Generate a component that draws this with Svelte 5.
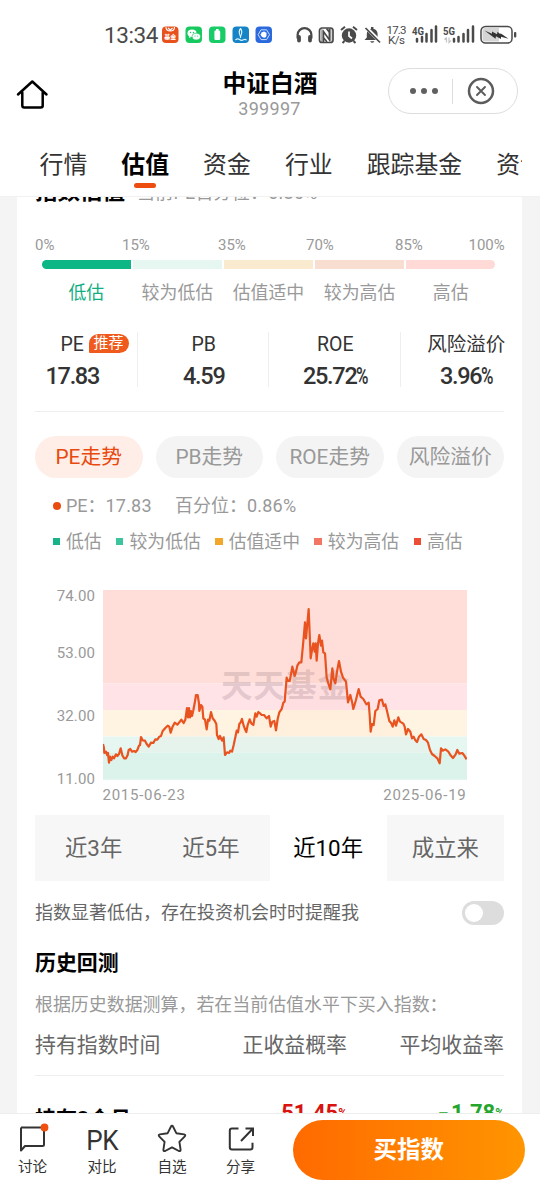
<script>
  const tabs = ['行情', '估值', '资金', '行业', '跟踪基金', '资讯'];
  const bands = [
    { name: '低估', color: '#0cb685' },
    { name: '较为低估', color: '#e6f6f1' },
    { name: '估值适中', color: '#faead0' },
    { name: '较为高估', color: '#f8ddd1' },
    { name: '高估', color: '#ffdad6' }
  ];
  const marks = ['0%', '15%', '35%', '70%', '85%', '100%'];
  const metrics = [
    { name: 'PE', value: '17.83', badge: '推荐' },
    { name: 'PB', value: '4.59' },
    { name: 'ROE', value: '25.72', pct: true },
    { name: '风险溢价', value: '3.96', pct: true }
  ];
  const trends = ['PE走势', 'PB走势', 'ROE走势', '风险溢价'];
  const legend = [
    { name: '低估', color: '#18b389' },
    { name: '较为低估', color: '#3cc49c' },
    { name: '估值适中', color: '#f2a62a' },
    { name: '较为高估', color: '#f37563' },
    { name: '高估', color: '#ee4d35' }
  ];
  const periods = ['近3年', '近5年', '近10年', '成立来'];

  const early =
    '189,507 192,520 193,534 198,530 201,540 204,534 207,563 210,545 214,555 218,545 222,550 228,538 232,543 237,537 242,520 247,541 252,550 258,550 263,540 266,525 271,522 276,530 282,528 287,531 292,525 297,512 300,510 303,486 308,496 315,497 320,507 326,515 333,503 340,504 346,493 352,494 358,485 363,483 368,468 376,459 383,452 388,455 392,473 397,457 404,443 412,449 418,442 424,434 431,444 436,434 441,399 444,427 447,399 450,427 453,408 456,423 460,406 464,385 468,360 473,360 477,385 478,408 483,390 487,395 490,430 495,434 500,463 504,434 508,437 513,411 518,430 524,437 529,447 531,480 536,492 540,483 546,497 551,487 555,540 561,532 567,534 571,527 576,530 581,510 586,487 590,467 594,472 598,447 602,442 606,432 611,452 616,465 619,471 623,450 629,433 634,445 640,450 646,415 650,425 655,411';
  const late =
    '0,415 5,420 12,420 20,430 27,423 32,455 37,440 43,438 48,466 53,432 58,412 65,402 70,383 74,380 80,308 84,318 89,318 92,303 97,275 104,303 108,290 112,272 118,262 124,262 129,210 135,142 138,190 146,102 152,250 156,225 160,205 164,230 167,205 170,257 174,205 178,180 183,212 186,197 190,232 195,235 200,308 205,325 211,343 217,280 221,312 226,325 231,290 237,258 243,290 249,308 258,320 264,382 271,360 276,380 280,402 287,378 296,342 302,365 310,372 319,388 326,383 329,420 332,470 336,447 341,450 346,408 353,402 358,376 366,374 371,393 376,388 381,408 388,438 394,445 398,455 403,436 408,452 415,427 420,440 430,446 434,455 438,478 444,462 451,470 456,490 461,485 466,496 471,501 477,485 484,478 491,492 498,495 504,503 510,525 516,537 524,543 532,550 539,565 543,520 549,527 556,523 565,530 571,540 579,549 587,538 592,525 598,536 607,534 613,542 620,553';
  const parse = (s, dx) =>
    s.split(' ').map((p) => {
      const [x, y] = p.split(',').map(Number);
      return `${((x + dx) / 3).toFixed(2)},${((y - 45) / 3).toFixed(2)}`;
    });
  const line = [...parse(early, -189), ...parse(late, 471)].join(' ');
</script>

<div class="screen">
  <header>
    <div class="status">
      <span class="time">13:34</span>
      <svg class="apps" width="112" height="20" viewBox="0 0 112 20">
        <rect x="1" y="1.500" width="16.500" height="16.500" rx="4" fill="#e8501c" />
        <path d="M5 2q0 4 4.300 4T13.500 2M7 3l2.300 2L11.500 3" stroke="#fff" stroke-width="1.100" fill="none" />
        <text x="9.200" y="14.300" font-size="6" font-weight="700" fill="#fff" text-anchor="middle">基金</text>
        <rect x="24.500" y="1.500" width="16.500" height="16.500" rx="4" fill="#18c95f" />
        <ellipse cx="31" cy="8.300" rx="4.500" ry="3.700" fill="#fff" />
        <ellipse cx="35.300" cy="11.600" rx="4.200" ry="3.400" fill="#fff" stroke="#18c95f" stroke-width=".7" />
        <path d="M28 13l.3-2 2 1z" fill="#fff" />
        <g fill="#18c95f"><circle cx="29.500" cy="7.500" r=".7" /><circle cx="32.500" cy="7.500" r=".7" /><circle cx="34" cy="11" r=".6" /><circle cx="36.700" cy="11" r=".6" /></g>
        <rect x="48" y="1.500" width="16.500" height="16.500" rx="4" fill="#18cd68" />
        <rect x="53.400" y="5.500" width="5.800" height="9.500" rx="1.200" fill="#fff" /><rect x="55" y="4" width="2.600" height="2" fill="#fff" />
        <rect x="71.500" y="1.500" width="16.500" height="16.500" rx="4" fill="#1583c5" />
        <path d="M79.500 3.500q-2.500 3 0 8q2.500-5 0-8M79.500 11v2M74.500 15q2-2 4-.5t4 .3 3 .5" stroke="#d9f3ff" stroke-width="1.200" fill="none" />
        <rect x="94.500" y="1.500" width="16.500" height="16.500" rx="4" fill="#2a6add" />
        <path d="M100 4.800h5.600l2.900 4.900-2.900 4.900H100l-2.900-4.900z" stroke="#c9dcff" stroke-width="1" fill="none" />
        <path d="M100.200 9V7.500h1V7h1.200v-.5h1.200V7h1v.7h.9V10q0 2.700-2.300 2.700T99.300 9.500z" fill="#fff" />
      </svg>
      <svg class="sys" width="222" height="24" viewBox="0 0 222 24">
        <g fill="none" stroke="#4a4a4a">
          <path d="M2.600 15.500V12a6.900 6.900 0 0 1 13.800 0v3.500" stroke-width="2.200" />
          <path d="M4 14v3.500M15 14v3.500" stroke-width="3.800" stroke-linecap="round" />
          <rect x="24.500" y="5" width="13.500" height="14.500" rx="2.500" stroke-width="1.700" />
          <path d="M28.500 19V8.500l6 8.500V6M31.500 5.500l3 4M28 14l4 5" stroke-width="1.600" />
        </g>
        <path d="M26 5.500l3 3V19h-3zM36.500 5v14l-3-3V5z" fill="#4a4a4a" opacity=".45" />
        <circle cx="54" cy="12.500" r="7.200" fill="#4a4a4a" />
        <path d="M54 8.500v4.500l3 2.500" stroke="#fff" stroke-width="1.700" fill="none" />
        <path d="M46 7l4-3.200M62 7l-4-3.200M49.500 18l-2 2M58.500 18l2 2" stroke="#4a4a4a" stroke-width="2" />
        <path d="M69.500 17l2.300-2.500V11q0-4 4.200-5.200V4h2.400v1.800q4.200 1.200 4.200 5.200v3.500L85 17zM75 18.300h4.500q-2.200 3-4.500 0" fill="#4a4a4a" />
        <path d="M71.500 5l14.500 14.500" stroke="#fff" stroke-width="3.500" /><path d="M70.500 5l14.500 14.500" stroke="#4a4a4a" stroke-width="1.700" />
        <g fill="#4a4a4a" font-size="11.500">
          <text x="91.500" y="11" textLength="20">17.3</text>
          <text x="93" y="21.300" textLength="17">K/s</text>
        </g>
        <g fill="#4a4a4a" font-size="10.500" font-weight="700">
          <text x="117" y="11.500" textLength="12" lengthAdjust="spacingAndGlyphs">4G</text>
          <text x="148" y="11.500" textLength="12" lengthAdjust="spacingAndGlyphs">5G</text>
        </g>
        <path d="M122 16v2.500M127 14v4.500M131.500 11v7.500M136.500 7v11.500M141 3.500v15M159 16v2.500M163.500 14v4.500M168.500 11v7.500M173 7v11.500M178 3.500v15" stroke="#4a4a4a" stroke-width="2.500" stroke-linecap="round" />
        <path d="M151.500 14.500v5M149.500 16.500l2-2M154 14.500v5l2-2" stroke="#c4c4c4" stroke-width="1.200" fill="none" />
        <rect x="186" y="3.500" width="31" height="16.500" rx="4.500" fill="#fff" stroke="#4a4a4a" stroke-width="1.500" />
        <path d="M190 5h14v13.500h-14q-2.500 0-2.500-2.500V7.500q0-2.500 2.500-2.500z" fill="#d5d5d5" />
        <path d="M189.500 7.500l7.500 3.300v-2.300l5 2.800.5-2.500 3 2.500v-1l8 5.500-7.500-2v2.300l-5-2.800-.5 2.500-3-2.300z" fill="#333" />
        <rect x="219" y="9" width="2.300" height="5.500" rx="1" fill="#4a4a4a" />
      </svg>
    </div>
    <div class="titlebar">
      <svg class="home" width="34" height="32" viewBox="0 0 34 32" fill="none" stroke="#000" stroke-width="2.500" stroke-linejoin="round" stroke-linecap="round">
        <path d="M2 15.500L16.300 2.500l14.200 13M6.300 13.500v13q0 2 2 2h16.400q2 0 2-2v-13" />
      </svg>
      <div class="name"><h1>中证白酒</h1><p>399997</p></div>
      <div class="capsule">
        <i></i><i></i><i></i><b></b>
        <svg width="28" height="28" viewBox="0 0 28 28" fill="none" stroke="#5c5c5c"><circle cx="14" cy="14" r="12" stroke-width="2.500" /><path d="M10 10l8 8M18 10l-8 8" stroke-width="1.900" stroke-linecap="round" /></svg>
      </div>
    </div>
    <nav class="tabs">
      {#each tabs as t, i}<span class:active={i === 1}>{t}</span>{/each}
    </nav>
  </header>

  <main>
    <section class="card">
      <div class="cardhead"><strong>指数估值</strong><span>当前PE百分位：0.86%</span></div>
      <div class="marks">{#each marks as m}<span>{m}</span>{/each}</div>
      <div class="segments">
        {#each bands as b}<i style="background:{b.color}"></i>{/each}
      </div>
      <div class="segnames">{#each bands as b, i}<span class:on={i === 0}>{b.name}</span>{/each}</div>
      <div class="metrics">
        {#each metrics as m}
          <div class="metric">
            <span class="mname">{m.name}{#if m.badge}<em>{m.badge}</em>{/if}</span>
            <span class="mvalue">{m.value}{#if m.pct}<small>%</small>{/if}</span>
          </div>
        {/each}
      </div>
      <div class="chips">
        {#each trends as t, i}<span class:on={i === 0}>{t}</span>{/each}
      </div>
      <div class="current"><i></i><span class="pe">PE：</span><span class="n1">17.83</span><span class="pct">百分位：</span><span class="n2">0.86%</span></div>
      <div class="legend">
        {#each legend as l}<span><i style="background:{l.color}"></i>{l.name}</span>{/each}
      </div>
      <div class="chart">
        <div class="axis"><span>74.00</span><span>53.00</span><span>32.00</span><span>11.00</span></div>
        <div class="plot">
          <svg width="364" height="190" viewBox="0 0 364 190">
            <defs>
              <linearGradient id="area" x1="0" y1="0" x2="0" y2="190" gradientUnits="userSpaceOnUse">
                <stop offset="0" stop-color="#f2561d" stop-opacity=".06" /><stop offset="1" stop-color="#f2561d" stop-opacity="0.015" />
              </linearGradient>
            </defs>
            <rect width="364" height="93.500" fill="#ffddd8" />
            <rect y="93.500" width="364" height="26.500" fill="#ffe3e7" />
            <rect y="120" width="364" height="26.500" fill="#fff3e2" />
            <rect y="146.500" width="364" height="16" fill="#e6f6f1" />
            <rect y="162.500" width="364" height="27.200" fill="#dbf3ea" />
            <text x="118" y="106.500" font-size="31.500" font-weight="700" textLength="128" fill="#755b66" opacity=".19">天天基金</text>
            <polygon points="0,162.5 {line} 364,162.5" fill="url(#area)" />
            <polyline points={line} fill="none" stroke="#e8531f" stroke-width="2.200" stroke-linejoin="round" />
          </svg>
          <div class="dates"><span>2015-06-23</span><span>2025-06-19</span></div>
        </div>
      </div>
      <div class="periods">{#each periods as p, i}<span class:on={i === 2}>{p}</span>{/each}</div>
      <div class="remind"><span>指数显著低估，存在投资机会时时提醒我</span><i class="switch"></i></div>
      <h2>历史回测</h2>
      <p class="desc">根据历史数据测算，若在当前估值水平下买入指数：</p>
      <div class="row th"><span>持有指数时间</span><span>正收益概率</span><span>平均收益率</span></div>
      <div class="row td"><span>持有3个月</span><span class="up">51.45<small>%</small></span><span class="down"><b>-</b>1.78<small>%</small></span></div>
    </section>
  </main>

  <footer>
    <div class="act">
      <svg width="34" height="32" viewBox="0 0 34 32"><path d="M5 5.500h21.500q1.500 0 1.500 1.500v15.500q0 1.500-1.500 1.500H9l-4 4.500V5.500" fill="none" stroke="#333" stroke-width="2" stroke-linejoin="round" /><circle cx="28.500" cy="5.500" r="3.900" fill="#f0500f" /></svg>
      <span>讨论</span>
    </div>
    <div class="act"><div class="pk">PK</div><span>对比</span></div>
    <div class="act">
      <svg width="34" height="32" viewBox="0 0 34 32"><path d="M17 3.600q.6 0 1 .9l3.300 6.700 7.800 1.200q1.900.5.700 2l-5.400 5.500 1.200 7.800q0 1.900-1.700 1.300L17 25.400l-6.900 3.600q-1.700.6-1.700-1.300l1.200-7.800-5.400-5.500q-1.200-1.500.7-2l7.800-1.200L16 4.500q.4-.9 1-.9z" fill="none" stroke="#333" stroke-width="1.900" stroke-linejoin="round" /></svg>
      <span>自选</span>
    </div>
    <div class="act">
      <svg width="34" height="32" viewBox="0 0 34 32" fill="none" stroke="#333" stroke-width="2"><path d="M14.500 6.500H8Q5.800 6.500 5.800 8.700v16.600q0 2.200 2.200 2.200h18.300q2.200 0 2.200-2.200v-4.500M17 19L28.500 7M21.500 6.500H29V14" /></svg>
      <span>分享</span>
    </div>
    <button>买指数</button>
  </footer>
</div>

<style>
  :global(body) { margin: 0; background: #fff; }
  * { box-sizing: border-box; }
  .screen { width: 540px; height: 1188px; overflow: hidden; display: flex; flex-direction: column; background: #f4f4f4; font-family: Roboto, "Noto Sans CJK SC", sans-serif; color: #333; }
  i, em { font-style: normal; }
  header { height: 197px; flex: none; background: #fff; border-bottom: 1px solid #f1f1f1; }
  .status { height: 69px; display: flex; align-items: center; padding: 0 22px 0 104px; }
  .time { width: 57px; font-size: 22.500px; letter-spacing: -.4px; color: #4a4a4a; white-space: nowrap; line-height: 30px; }
  .apps { flex: none; }
  .sys { flex: none; margin-left: 22px; overflow: visible; }
  .titlebar { height: 68px; display: grid; grid-template-columns: 130px 1fr 130px; padding: 0 22px 0 16px; margin-top: -1px; }
  .home { margin-top: 11px; }
  .name { text-align: center; margin-right: -5px; }
  h1 { margin: 2px 0 0 1px; font-size: 23.800px; line-height: 29px; font-weight: 700; color: #000; }
  .name p { margin: 0; font-size: 18px; line-height: 20px; letter-spacing: .3px; color: #999; }
  .capsule { height: 46px; width: 130px; border: 1px solid #ddd; border-radius: 23px; display: flex; align-items: center; padding-left: 21px; }
  .capsule i { width: 6px; height: 6px; border-radius: 50%; background: #606060; margin-right: 4.800px; }
  .capsule b { width: 1px; height: 25px; background: #ddd; margin: 0 14px 0 10px; }
  .tabs { height: 60px; margin: 0 18px 0 0; padding: 11px 0 0 39.500px; display: flex; gap: 34px; overflow: hidden; white-space: nowrap; font-size: 23.900px; line-height: 36px; }
  .tabs span { flex: none; display: flex; flex-direction: column; align-items: center; }
  .tabs .active { color: #000; font-weight: 700; }
  .tabs .active::after { content: ''; width: 22px; height: 5px; border-radius: 3px; background: #ee4d10; }
  main { flex: 1; min-height: 0; overflow: hidden; padding: 0 18px 0 17px; }
  .card { background: #fff; padding: 0 18px; height: 960px; overflow: hidden; }
  .cardhead { margin-top: -21px; height: 30px; line-height: 31px; display: flex; gap: 12px; white-space: nowrap; }
  .cardhead strong { font-size: 22.500px; color: #000; }
  .cardhead span { font-size: 18px; letter-spacing: .2px; line-height: 33px; color: #999; }
  .marks { margin-top: 28px; height: 20px; display: grid; grid-template-columns: 87px 96px 88px 89px 73.500px 36px; font-size: 15px; line-height: 22.500px; color: #999; }
  .segments { margin-top: 5.500px; height: 9px; display: flex; gap: 2.500px; padding: 0 9px 0 7px; }
  .segments i { flex: 1; }
  .segments i:first-child { border-radius: 5px 0 0 5px; }
  .segments i:last-child { border-radius: 0 5px 5px 0; }
  .segnames { margin-top: 11px; height: 24px; display: flex; gap: 2.500px; padding: 0 9px 0 7px; font-size: 17.900px; line-height: 26px; color: #999; }
  .segnames span { flex: 1; text-align: center; white-space: nowrap; }
  .segnames .on { color: #12ae82; }
  .metrics { margin: 28.500px -28px 0 -29px; height: 55px; display: grid; grid-template-columns: repeat(4, 1fr); grid-template-rows: 55px; }
  .metric { display: flex; flex-direction: column; align-items: center; border-right: 1px solid #eee; padding-left: 2px; }
  .metric:last-child { border: 0; padding: 0; }
  .mname { position: relative; font-size: 19.500px; line-height: 26px; white-space: nowrap; }
  .mname em { position: absolute; left: 28px; top: 2px; width: 40px; height: 19px; border-radius: 10px 10px 10px 1px; background: #f05a1c; color: #fff; font-size: 15px; line-height: 19px; text-align: center; }
  .mvalue { margin-top: 2px; font-size: 23.500px; line-height: 33px; font-weight: 500; letter-spacing: -1.300px; }
  .mvalue small { display: inline-block; font-size: 23.500px; transform: scaleX(.72); transform-origin: 0 50%; margin-right: -5px; }
  .chips { margin-top: 24px; padding-top: 24px; border-top: 1px solid #eee; display: flex; justify-content: space-between; }
  .chips span { width: 107.500px; height: 41.500px; border-radius: 21px; background: #f4f4f4; color: #999; font-size: 20.800px; line-height: 42px; text-align: center; white-space: nowrap; }
  .chips .on { background: #ffede7; color: #e8490f; }
  .current { margin-top: 16px; height: 24px; padding-left: 17.500px; display: flex; align-items: center; font-size: 18px; line-height: 24px; color: #999; white-space: nowrap; }
  .current i { width: 8px; height: 8px; border-radius: 50%; background: #ea4c10; margin-right: 5.500px; }
  .current span { flex: none; }
  .pe { width: 39.500px; }
  .n1 { width: 69.500px; letter-spacing: .2px; }
  .pct { width: 72px; }
  .n2 { letter-spacing: .2px; }
  .legend { margin-top: 12px; height: 24px; padding-left: 17.500px; display: flex; gap: 14.300px; font-size: 17.850px; line-height: 24px; color: #999; white-space: nowrap; }
  .legend span { display: flex; align-items: center; gap: 6px; }
  .legend i { width: 7.500px; height: 7.500px; }
  .chart { margin-top: 36px; height: 225px; display: flex; color: #999; font-size: 15px; }
  .axis { width: 60px; height: 190px; margin-right: 7.500px; display: grid; grid-template-rows: 57px 63px 63px 20px; text-align: right; line-height: 13px; letter-spacing: .1px; }
  .plot svg { display: block; }
  .dates { margin-top: 5px; display: flex; justify-content: space-between; line-height: 20px; letter-spacing: .75px; }
  .periods { height: 66px; display: flex; background: #f7f7f7; }
  .periods span { flex: 1; text-align: center; font-size: 22.400px; line-height: 66px; color: #666; }
  .periods .on { background: #fff; color: #000; }
  .remind { margin-top: 19px; height: 26px; display: flex; justify-content: space-between; align-items: center; font-size: 18px; line-height: 24px; color: #666; white-space: nowrap; }
  .remind span { margin-top: 1px; }
  .switch { width: 42px; height: 24px; border-radius: 12px; background: #ddd; padding: 3px; }
  .switch::after { content: ''; display: block; width: 18px; height: 18px; border-radius: 50%; background: #fff; }
  h2 { margin: 23px 0 0; font-size: 20.900px; line-height: 28px; color: #000; }
  .desc { margin: 16px 0 0; font-size: 17.950px; line-height: 24px; color: #999; white-space: nowrap; }
  .row { display: grid; grid-template-columns: 156px 156px 157px; white-space: nowrap; }
  .row span:not(:first-child) { text-align: right; }
  .th { margin-top: 14px; height: 45px; border-bottom: 1.500px solid #eee; font-size: 20.900px; line-height: 28px; color: #666; }
  .td { margin-top: 27px; font-size: 21px; font-weight: 700; line-height: 32px; color: #000; }
  .td small { font-size: 12px; position: relative; top: -3px; }
  .td .up { color: #d9130f; }
  .td .down { color: #25a52b; }
  .down b { display: inline-block; transform: scaleX(1.3); transform-origin: 100% 50%; margin-right: 1px; }
  .up, .down { margin-top: -6px; font-size: 22px; }
  footer { height: 75px; flex: none; background: #fff; border-top: 1px solid #eee; display: flex; padding: 6px 15px 0 0; }
  .act { width: 69.500px; display: flex; flex-direction: column; align-items: center; flex: none; }
  .act:first-child { width: 65px; }
  .act:nth-child(2) { width: 74px; }
  .act:nth-child(3) { width: 66px; }
  .act:nth-child(4) { width: 71px; }
  .act svg, .pk { height: 32px; margin-top: 2px; flex: none; }
  .act span { font-size: 14.600px; line-height: 20px; margin-top: 3px; }
  .pk { font-size: 28px; line-height: 37px; letter-spacing: -.5px; transform: scaleX(.93); }
  button { margin-left: auto; width: 232.500px; height: 60px; border: 0; border-radius: 30px; background: linear-gradient(90deg, #ff6a00, #ff9500); color: #fff; font: 700 23.500px/58px Roboto, "Noto Sans CJK SC", sans-serif; padding: 0; }
</style>
